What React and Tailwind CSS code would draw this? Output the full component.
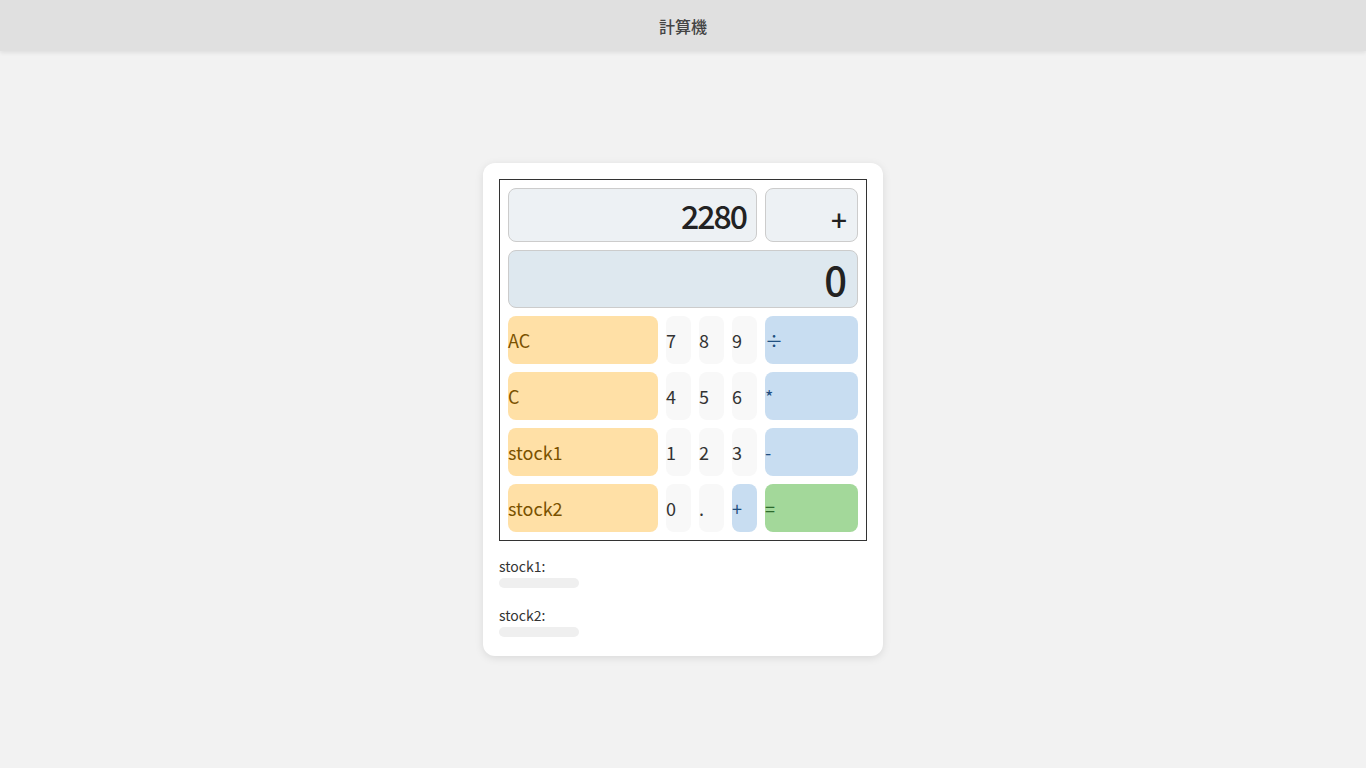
const OPS = ["÷", "*", "-"];

const Key = ({ label, className }) => (
  <button
    className={`flex items-center rounded-lg text-left text-[18px] leading-none ${className}`}
  >
    {label}
  </button>
);

const StockRow = ({ name }) => (
  <div className="flex flex-col">
    <span className="text-[14px] leading-[20px] text-[#333]">{name}:</span>
    <div className="mt-[2px] h-[10px] w-[80px] rounded-full bg-[#efefef]"></div>
  </div>
);

export default function App() {
  const rows = [
    ["AC", "7", "8", "9", OPS[0]],
    ["C", "4", "5", "6", OPS[1]],
    ["stock1", "1", "2", "3", OPS[2]],
  ];

  return (
    <div
      className="min-h-screen bg-[#f2f2f2]"
      style={{ fontFamily: '"Noto Sans CJK JP", "DejaVu Sans", sans-serif' }}
    >
      <header className="flex h-[51px] items-center justify-center bg-[#e0e0e0] shadow-[0_2px_4px_rgba(0,0,0,0.08)]">
        <h1 className="text-[16px] font-medium text-[#444]">計算機</h1>
      </header>

      <main className="flex justify-center pt-[112px]">
        <div className="w-[400px] rounded-xl bg-white p-4 pb-[19px] shadow-[0_2px_8px_rgba(0,0,0,0.1)]">
          <div className="border border-[#333] p-2">
            <div className="flex gap-2">
              <div className="flex h-[54px] w-[249px] items-center justify-end rounded-lg border border-[#ccc] bg-[#edf1f4] pr-[10px] text-[32px] font-medium tracking-[-2px] text-[#222]">
                2280
              </div>
              <div className="flex h-[54px] flex-1 items-end justify-end rounded-lg border border-[#ccc] bg-[#edf1f4] pb-[8px] pr-[10px] text-[28px] font-medium leading-none text-[#222]">
                +
              </div>
            </div>
            <div className="mt-2 flex h-[58px] items-center justify-end rounded-lg border border-[#ccc] bg-[#dee8ef] pr-[10px] text-[40px] font-medium text-[#222]">
              0
            </div>

            <div className="mt-2 grid grid-cols-[150px_25px_25px_25px_93px] grid-rows-[repeat(4,48px)] gap-2">
              {rows.map((row) => (
                <div key={row[0]} className="contents">
                  <Key label={row[0]} className="bg-[#ffe0a6] text-[#7a5200]" />
                  {row.slice(1, 4).map((d) => (
                    <Key key={d} label={d} className="bg-[#f8f8f8] text-[#333]" />
                  ))}
                  <Key label={row[4]} className="bg-[#c8ddf1] text-[#1f4f80]" />
                </div>
              ))}
              <Key label="stock2" className="bg-[#ffe0a6] text-[#7a5200]" />
              <Key label="0" className="bg-[#f8f8f8] text-[#333]" />
              <Key label="." className="bg-[#f8f8f8] text-[#333]" />
              <Key label="+" className="bg-[#c8ddf1] text-[#1f4f80]" />
              <Key label="=" className="bg-[#a3d89a] text-[#2d6a2d]" />
            </div>
          </div>

          <div className="mt-[15px] flex flex-col gap-[17px]">
            <StockRow name="stock1" />
            <StockRow name="stock2" />
          </div>
        </div>
      </main>
    </div>
  );
}
